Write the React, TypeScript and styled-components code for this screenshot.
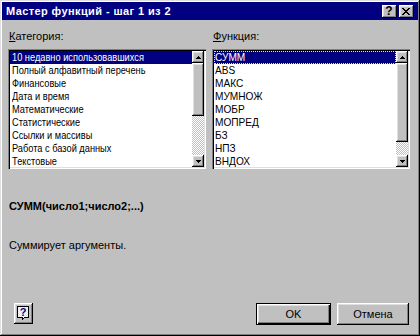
import React from "react";
import styled, { createGlobalStyle, css } from "styled-components";

const GlobalStyle = createGlobalStyle`
  html, body { margin: 0; padding: 0; background: #c0c0c0; }
  body { font-family: "Liberation Sans", Arial, sans-serif; font-size: 11px; color: #000; }
  * { box-sizing: border-box; }
`;

const raised = css`
  box-shadow: inset -1px -1px #000, inset 1px 1px #fff, inset -2px -2px #808080, inset 2px 2px #dfdfdf;
`;

const Window = styled.div`
  width: 420px;
  height: 336px;
  background: #c0c0c0;
  padding: 2px;
  display: flex;
  flex-direction: column;
  box-shadow: inset -1px -1px #000, inset 1px 1px #dfdfdf, inset -2px -2px #808080, inset 2px 2px #fff;
`;

const TitleBar = styled.div`
  height: 18px;
  background: #000080;
  display: flex;
  align-items: center;
  padding: 0 4px 0 4px;
  gap: 2px;
`;

const TitleText = styled.div`
  flex: 1;
  color: #fff;
  font-weight: bold;
  font-size: 11px;
  letter-spacing: 0.4px;
  line-height: 13px;
  white-space: nowrap;
`;

const TitleButton = styled.div`
  width: 15px;
  height: 13px;
  background: #c0c0c0;
  ${raised}
  display: flex;
  align-items: center;
  justify-content: center;
  font-weight: bold;
  font-size: 12px;
  line-height: 11px;
  padding-right: 1px;
`;

const Body = styled.div`
  flex: 1;
  display: flex;
  flex-direction: column;
  padding: 10px 8px 9px 6px;
`;

const Columns = styled.div`
  display: grid;
  grid-template-columns: 198px 198px;
  column-gap: 6px;
`;

const Column = styled.div`
  display: flex;
  flex-direction: column;
`;

const Label = styled.div<{ $indent: number }>`
  height: 13px;
  line-height: 13px;
  padding-left: ${(p) => p.$indent}px;
  margin-bottom: 6px;
  white-space: nowrap;
  u { text-decoration: underline; text-underline-offset: 1px; }
`;

const ListBox = styled.div`
  height: 120px;
  padding: 2px;
  background: #fff;
  display: flex;
  overflow: hidden;
  box-shadow: inset 1px 1px #808080, inset 2px 2px #000, inset -1px -1px #fff, inset -2px -2px #dfdfdf;
`;

const Items = styled.div`
  flex: 1;
  min-width: 0;
  overflow: hidden;
`;

const Item = styled.div<{ $selected?: boolean; $focus?: boolean; $pad: number }>`
  height: 13px;
  line-height: 13px;
  padding-left: ${(p) => p.$pad}px;
  white-space: nowrap;
  background: ${(p) => (p.$selected ? "#000080" : "transparent")};
  color: ${(p) => (p.$selected ? "#fff" : "#000")};
  ${(p) =>
    p.$focus &&
    css`
      outline: 1px dotted #ffff00;
      outline-offset: -1px;
    `}
`;

const ItemText = styled.span<{ $scale: number }>`
  display: inline-block;
  transform: scaleX(${(p) => p.$scale});
  transform-origin: left center;
`;

const ScrollBar = styled.div`
  width: 12px;
  display: flex;
  flex-direction: column;
`;

const ScrollButton = styled.div`
  height: 12px;
  background: #c0c0c0;
  ${raised}
  display: flex;
  align-items: center;
  justify-content: center;
`;

const Thumb = styled.div<{ $size: number }>`
  height: ${(p) => p.$size}px;
  background: #c0c0c0;
  ${raised}
`;

const Track = styled.div`
  flex: 1;
  background: repeating-conic-gradient(#c0c0c0 0 25%, #fff 0 50%) 0 0 / 2px 2px;
`;

const Syntax = styled.div`
  margin-top: 31px;
  padding-left: 1px;
  font-weight: bold;
  line-height: 13px;
`;

const Description = styled.div`
  margin-top: 26px;
  padding-left: 1px;
  line-height: 13px;
`;

const Footer = styled.div`
  margin-top: auto;
  display: flex;
  align-items: flex-start;
  padding: 0 1px 0 6px;
`;

const HelpButton = styled.div`
  width: 19px;
  height: 21px;
  background: #c0c0c0;
  ${raised}
  display: flex;
  align-items: center;
  justify-content: center;
`;

const Spacer = styled.div`
  flex: 1;
`;

const PushButton = styled.div<{ $default?: boolean; $width: number }>`
  width: ${(p) => p.$width}px;
  height: 22px;
  background: #c0c0c0;
  display: flex;
  align-items: center;
  justify-content: center;
  line-height: 13px;
  ${(p) =>
    p.$default
      ? css`
          box-shadow: inset 0 0 0 1px #000, inset 2px 2px #fff, inset -2px -2px #000, inset -3px -3px #808080, inset 3px 3px #dfdfdf;
        `
      : raised}
`;

const ButtonRow = styled.div`
  display: flex;
  gap: 6px;
`;

const Arrow = ({ down }: { down?: boolean }) => (
  <svg width="5" height="3" viewBox="0 0 5 3" shapeRendering="crispEdges" style={{ display: "block" }}>
    {down ? (
      <>
        <rect x="0" y="0" width="5" height="1" fill="#000" />
        <rect x="1" y="1" width="3" height="1" fill="#000" />
        <rect x="2" y="2" width="1" height="1" fill="#000" />
      </>
    ) : (
      <>
        <rect x="2" y="0" width="1" height="1" fill="#000" />
        <rect x="1" y="1" width="3" height="1" fill="#000" />
        <rect x="0" y="2" width="5" height="1" fill="#000" />
      </>
    )}
  </svg>
);

const CloseGlyph = () => (
  <svg width="8" height="7" viewBox="0 0 8 7" shapeRendering="crispEdges" style={{ display: "block" }}>
    {[0, 1, 2, 3, 4, 5, 6].map((i) => (
      <React.Fragment key={i}>
        <rect x={i} y={i} width="2" height="1" fill="#000" />
        <rect x={6 - i} y={i} width="2" height="1" fill="#000" />
      </React.Fragment>
    ))}
  </svg>
);

const HelpIcon = () => (
  <svg width="13" height="15" viewBox="0 0 13 15" shapeRendering="crispEdges" style={{ display: "block" }}>
    <defs>
      <pattern id="dots" width="2" height="2" patternUnits="userSpaceOnUse">
        <rect width="2" height="2" fill="#ffffff" />
        <rect width="1" height="1" fill="#ffff00" />
        <rect x="1" y="1" width="1" height="1" fill="#ffff00" />
      </pattern>
    </defs>
    <path d="M0.5 0.5 H11.5 V11.5 H7.5 L5.5 13.5 V11.5 H0.5 Z" fill="url(#dots)" stroke="#000" />
    <text x="6" y="10" textAnchor="middle" fontFamily="Liberation Sans, Arial, sans-serif" fontWeight="bold" fontSize="11" fill="#000080">
      ?
    </text>
  </svg>
);

type ListProps = { items: string[]; thumb: number; focus?: boolean; pad: number; scale: number };

const List = ({ items, thumb, focus, pad, scale }: ListProps) => (
  <ListBox>
    <Items>
      {items.map((t, i) => (
        <Item key={t} $selected={i === 0} $focus={focus && i === 0} $pad={pad}>
          <ItemText $scale={scale}>{t}</ItemText>
        </Item>
      ))}
    </Items>
    <ScrollBar>
      <ScrollButton>
        <Arrow />
      </ScrollButton>
      <Thumb $size={thumb} />
      <Track />
      <ScrollButton>
        <Arrow down />
      </ScrollButton>
    </ScrollBar>
  </ListBox>
);

const categories = [
  "10 недавно использовавшихся",
  "Полный алфавитный перечень",
  "Финансовые",
  "Дата и время",
  "Математические",
  "Статистические",
  "Ссылки и массивы",
  "Работа с базой данных",
  "Текстовые",
];

const functions = ["СУММ", "ABS", "МАКС", "МУМНОЖ", "МОБР", "МОПРЕД", "БЗ", "НПЗ", "ВНДОХ"];

export default function App() {
  return (
    <>
      <GlobalStyle />
      <Window>
        <TitleBar>
          <TitleText>Мастер функций - шаг 1 из 2</TitleText>
          <TitleButton>?</TitleButton>
          <TitleButton>
            <CloseGlyph />
          </TitleButton>
        </TitleBar>
        <Body>
          <Columns>
            <Column>
              <Label $indent={1}>
                <u>К</u>атегория:
              </Label>
              <List items={categories} thumb={53} pad={2} scale={0.84} />
            </Column>
            <Column>
              <Label $indent={1}>
                <u>Ф</u>ункция:
              </Label>
              <List items={functions} thumb={79} focus pad={1} scale={0.92} />
            </Column>
          </Columns>
          <Syntax>СУММ(число1;число2;...)</Syntax>
          <Description>Суммирует аргументы.</Description>
          <Footer>
            <HelpButton>
              <HelpIcon />
            </HelpButton>
            <Spacer />
            <ButtonRow>
              <PushButton $default $width={75}>
                OK
              </PushButton>
              <PushButton $width={72}>Отмена</PushButton>
            </ButtonRow>
          </Footer>
        </Body>
      </Window>
    </>
  );
}
